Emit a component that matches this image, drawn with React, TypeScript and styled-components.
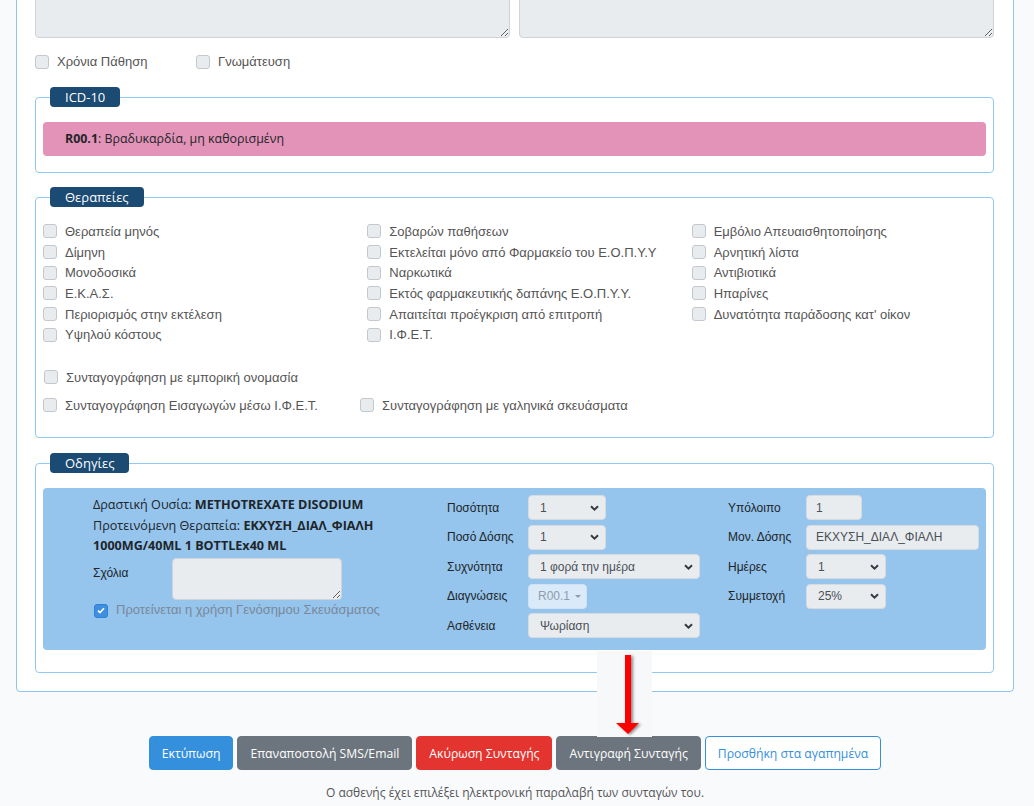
import styled, { createGlobalStyle } from "styled-components";

const sans = `"Liberation Sans", Arial, sans-serif`;
const round = `"Open Sans", "Noto Sans", sans-serif`;

const GlobalStyle = createGlobalStyle`
    html, body {
        margin: 0;
        padding: 0;
        background: #f8fafc;
        font-family: ${round};
        color: #212529;
    }
    * { box-sizing: border-box; }
`;

const therapyColumns = [
    ["Θεραπεία μηνός", "Δίμηνη", "Μονοδοσικά", "Ε.Κ.Α.Σ.", "Περιορισμός στην εκτέλεση", "Υψηλού κόστους"],
    ["Σοβαρών παθήσεων", "Εκτελείται μόνο από Φαρμακείο του Ε.Ο.Π.Υ.Υ", "Ναρκωτικά", "Εκτός φαρμακευτικής δαπάνης Ε.Ο.Π.Υ.Υ.", "Απαιτείται προέγκριση από επιτροπή", "Ι.Φ.Ε.Τ."],
    ["Εμβόλιο Απευαισθητοποίησης", "Αρνητική λίστα", "Αντιβιοτικά", "Ηπαρίνες", "Δυνατότητα παράδοσης κατ' οίκον"],
];

const Root = styled.div`
    position: relative;
    height: 806px;
    overflow: hidden;
    padding: 0 20px 0 16px;
`;

const Card = styled.section`
    margin-top: -40px;
    background: #fff;
    border: 1px solid #8ec4ee;
    border-radius: 0 0 4px 4px;
    padding: 20px 19px 18px 18px;
`;

const NotesRow = styled.div`
    display: grid;
    grid-template-columns: 1fr 1fr;
    gap: 9px;
`;

const TextArea = styled.textarea<{ $w?: number; $h: number }>`
    display: block;
    width: ${(p) => (p.$w ? `${p.$w}px` : "100%")};
    height: ${(p) => p.$h}px;
    background: #e9ecef;
    border: 1px solid #ced4da;
    border-radius: 4px;
    resize: both;
    margin: 0;
`;

const FlagsRow = styled.div`
    display: grid;
    grid-template-columns: 161px auto;
    margin-top: 13px;
`;

const CheckItem = styled.label<{ $h?: number; $indent?: number }>`
    display: flex;
    align-items: center;
    gap: 8px;
    height: ${(p) => p.$h ?? 20.7}px;
    padding-left: ${(p) => p.$indent ?? 0}px;
    font-family: ${sans};
    font-size: 13px;
    color: #555;
    white-space: nowrap;
`;

const Box = styled.span<{ $checked?: boolean }>`
    flex: none;
    width: 14px;
    height: 14px;
    border-radius: 3px;
    border: 1px solid ${(p) => (p.$checked ? "#2f80d6" : "#c3c8ce")};
    background: ${(p) => (p.$checked ? "#3f8fe0" : "#e9ecef")};
    display: flex;
    align-items: center;
    justify-content: center;
`;

const Group = styled.fieldset<{ $mt: number; $pt: number; $pb: number }>`
    margin: ${(p) => p.$mt}px 0 0;
    padding: ${(p) => p.$pt}px 7px ${(p) => p.$pb}px;
    border: 1px solid #90c9f3;
    border-radius: 4px;
    min-width: 0;
`;

const Legend = styled.legend`
    margin-left: 7px;
    padding: 0 15px;
    height: 20px;
    line-height: 20px;
    background: #1b4a73;
    color: #fff;
    border-radius: 4px;
    font-size: 13px;
`;

const Diagnosis = styled.div`
    height: 34px;
    line-height: 34px;
    padding: 0 22px;
    background: #e493b8;
    border-radius: 4px;
    font-size: 12.4px;
`;

const TherapyGrid = styled.div`
    display: grid;
    grid-template-columns: repeat(3, 1fr);
    column-gap: 30px;
`;

const Column = styled.div`
    display: flex;
    flex-direction: column;
`;

const ExtraRow = styled.div<{ $mt?: number }>`
    display: grid;
    grid-template-columns: 317px auto;
    margin-top: ${(p) => p.$mt ?? 0}px;
`;

const Panel = styled.div`
    display: grid;
    grid-template-columns: 354px 281px 1fr;
    padding: 7px 7px 12px 50px;
    background: #95c4ec;
    border-radius: 4px;
`;

const Info = styled.div`
    padding-right: 15px;
    font-size: 12.6px;
    line-height: 20.5px;
    color: #212529;

    b { font-weight: 700; }
`;

const CommentRow = styled.div`
    display: grid;
    grid-template-columns: 79px 170px;
    margin-top: 1px;
`;

const SmallLabel = styled.span<{ $pt?: number }>`
    font-family: ${sans};
    font-size: 12px;
    color: #212529;
    padding-top: ${(p) => p.$pt ?? 0}px;
    white-space: nowrap;
`;

const GenericRow = styled.label`
    display: flex;
    align-items: center;
    gap: 8px;
    height: 20px;
    margin-top: 1px;
    padding-left: 1px;
    font-family: ${sans};
    font-size: 13px;
    color: #7a8899;
    white-space: nowrap;
`;

const FieldList = styled.div`
    display: flex;
    flex-direction: column;
    gap: 4.5px;
`;

const Field = styled.div<{ $label: number }>`
    display: grid;
    grid-template-columns: ${(p) => p.$label}px auto;
    align-items: center;
    height: 25px;
`;

const Control = styled.div<{ $w: number; $pl?: number }>`
    width: ${(p) => p.$w}px;
    height: 25px;
    display: flex;
    align-items: center;
    justify-content: space-between;
    padding: 0 6px 0 ${(p) => p.$pl ?? 11}px;
    background: #e9ecef;
    border: 1px solid #d6dbe0;
    border-radius: 4px;
    font-family: ${sans};
    font-size: 12px;
    color: #495057;
    white-space: nowrap;
`;

const DiagButton = styled.div`
    width: 59px;
    height: 25px;
    display: flex;
    align-items: center;
    gap: 5px;
    padding-left: 9px;
    background: #dbeaf8;
    border: 1px solid #cfe1f3;
    border-radius: 4px;
    font-family: ${sans};
    font-size: 12px;
    color: #8d9cae;
`;

const Caret = styled.span`
    width: 0;
    height: 0;
    border-left: 3px solid transparent;
    border-right: 3px solid transparent;
    border-top: 3px solid #8d9cae;
`;

const Actions = styled.div`
    display: flex;
    justify-content: center;
    gap: 4px;
    margin-top: 44px;
`;

const colors: Record<string, { bg: string; fg: string; border: string }> = {
    primary: { bg: "#3490dc", fg: "#fff", border: "#3490dc" },
    secondary: { bg: "#6c757d", fg: "#fff", border: "#6c757d" },
    danger: { bg: "#e3342f", fg: "#fff", border: "#e3342f" },
    outline: { bg: "#fff", fg: "#3490dc", border: "#3490dc" },
};

const Button = styled.button<{ $variant: string }>`
    height: 34px;
    padding: 0 12px;
    border-radius: 4px;
    border: 1px solid ${(p) => colors[p.$variant].border};
    background: ${(p) => colors[p.$variant].bg};
    color: ${(p) => colors[p.$variant].fg};
    font-family: ${round};
    font-size: 12.2px;
`;

const Footnote = styled.p`
    margin: 13px 0 0;
    text-align: center;
    font-size: 12px;
    line-height: 20px;
    color: #555;
`;

const ArrowNote = styled.div`
    position: absolute;
    left: 597px;
    top: 651px;
    width: 55px;
    height: 86px;
    background: #f7f8fa;

    svg {
        display: block;
        filter: drop-shadow(2px 1px 1.5px rgba(0, 0, 0, 0.45));
    }
`;

const Chevron = () => (
    <svg width="9" height="6" viewBox="0 0 9 6">
        <path d="M1 1.2 L4.5 4.6 L8 1.2" fill="none" stroke="#343a40" strokeWidth="2" />
    </svg>
);

const Tick = () => (
    <svg width="8" height="7" viewBox="0 0 8 7">
        <path d="M1 3.6 L3 5.6 L7 1.2" fill="none" stroke="#fff" strokeWidth="1.6" />
    </svg>
);

const Check = ({ label, h, indent }: { label: string; h?: number; indent?: number }) => (
    <CheckItem $h={h} $indent={indent}>
        <Box />
        {label}
    </CheckItem>
);

const Select = ({ w, value }: { w: number; value: string }) => (
    <Control $w={w}>
        {value}
        <Chevron />
    </Control>
);

export default function App() {
    return (
        <Root>
            <GlobalStyle />
            <Card>
                <NotesRow>
                    <TextArea $h={57} readOnly />
                    <TextArea $h={57} readOnly />
                </NotesRow>

                <FlagsRow>
                    <Check label="Χρόνια Πάθηση" h={21} />
                    <Check label="Γνωμάτευση" h={21} />
                </FlagsRow>

                <Group $mt={15} $pt={15} $pb={16}>
                    <Legend>ICD-10</Legend>
                    <Diagnosis>
                        <b>R00.1</b>: Βραδυκαρδία, μη καθορισμένη
                    </Diagnosis>
                </Group>

                <Group $mt={14} $pt={14} $pb={18}>
                    <Legend>Θεραπείες</Legend>
                    <TherapyGrid>
                        {therapyColumns.map((col, i) => (
                            <Column key={i}>
                                {col.map((item) => (
                                    <Check key={item} label={item} />
                                ))}
                            </Column>
                        ))}
                    </TherapyGrid>
                    <ExtraRow $mt={18}>
                        <Check label="Συνταγογράφηση με εμπορική ονομασία" h={28} indent={1} />
                    </ExtraRow>
                    <ExtraRow>
                        <Check label="Συνταγογράφηση Εισαγωγών μέσω Ι.Φ.Ε.Τ." h={28} />
                        <Check label="Συνταγογράφηση με γαληνικά σκευάσματα" h={28} />
                    </ExtraRow>
                </Group>

                <Group $mt={15} $pt={15} $pb={22}>
                    <Legend>Οδηγίες</Legend>
                    <Panel>
                        <Info>
                            <div>
                                Δραστική Ουσία: <b>METHOTREXATE DISODIUM</b>
                            </div>
                            <div>
                                Προτεινόμενη Θεραπεία: <b>ΕΚΧΥΣΗ_ΔΙΑΛ_ΦΙΑΛΗ 1000MG/40ML 1 BOTTLEx40 ML</b>
                            </div>
                            <CommentRow>
                                <SmallLabel $pt={5}>Σχόλια</SmallLabel>
                                <TextArea $w={170} $h={42} readOnly />
                            </CommentRow>
                            <GenericRow>
                                <Box $checked>
                                    <Tick />
                                </Box>
                                Προτείνεται η χρήση Γενόσημου Σκευάσματος
                            </GenericRow>
                        </Info>

                        <FieldList>
                            <Field $label={81}>
                                <SmallLabel>Ποσότητα</SmallLabel>
                                <Select w={78} value="1" />
                            </Field>
                            <Field $label={81}>
                                <SmallLabel>Ποσό Δόσης</SmallLabel>
                                <Select w={78} value="1" />
                            </Field>
                            <Field $label={81}>
                                <SmallLabel>Συχνότητα</SmallLabel>
                                <Select w={172} value="1 φορά την ημέρα" />
                            </Field>
                            <Field $label={81}>
                                <SmallLabel>Διαγνώσεις</SmallLabel>
                                <DiagButton>
                                    R00.1 <Caret />
                                </DiagButton>
                            </Field>
                            <Field $label={81}>
                                <SmallLabel>Ασθένεια</SmallLabel>
                                <Select w={172} value="Ψωρίαση" />
                            </Field>
                        </FieldList>

                        <FieldList>
                            <Field $label={78}>
                                <SmallLabel>Υπόλοιπο</SmallLabel>
                                <Control $w={56} $pl={9}>1</Control>
                            </Field>
                            <Field $label={78}>
                                <SmallLabel>Μον. Δόσης</SmallLabel>
                                <Control $w={173} $pl={9}>ΕΚΧΥΣΗ_ΔΙΑΛ_ΦΙΑΛΗ</Control>
                            </Field>
                            <Field $label={78}>
                                <SmallLabel>Ημέρες</SmallLabel>
                                <Select w={80} value="1" />
                            </Field>
                            <Field $label={78}>
                                <SmallLabel>Συμμετοχή</SmallLabel>
                                <Select w={80} value="25%" />
                            </Field>
                        </FieldList>
                    </Panel>
                </Group>
            </Card>

            <Actions>
                <Button $variant="primary">Εκτύπωση</Button>
                <Button $variant="secondary">Επαναποστολή SMS/Email</Button>
                <Button $variant="danger">Ακύρωση Συνταγής</Button>
                <Button $variant="secondary">Αντιγραφή Συνταγής</Button>
                <Button $variant="outline">Προσθήκη στα αγαπημένα</Button>
            </Actions>
            <Footnote>Ο ασθενής έχει επιλέξει ηλεκτρονική παραλαβή των συνταγών του.</Footnote>

            <ArrowNote>
                <svg width="55" height="86" viewBox="0 0 55 86">
                    <rect x="28" y="4" width="6" height="69" fill="#ff0000" />
                    <path d="M19 72 L42 72 L31 83 Z" fill="#ff0000" />
                </svg>
            </ArrowNote>
        </Root>
    );
}
